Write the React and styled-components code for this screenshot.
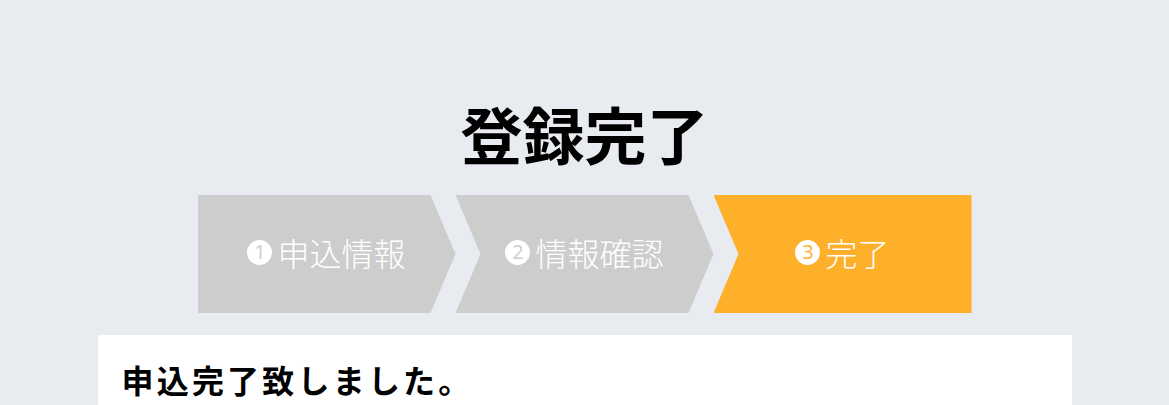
import React from 'react';
import styled, { createGlobalStyle } from 'styled-components';

const GlobalStyle = createGlobalStyle`
    html, body {
        margin: 0;
        padding: 0;
        background: #e8ebf0;
    }
    body {
        font-family: "Noto Sans CJK JP", "Noto Sans", sans-serif;
        color: #000;
    }
`;

const steps = [
    { no: 1, label: '申込情報' },
    { no: 2, label: '情報確認' },
    { no: 3, label: '完了' },
];

// depth of the chevron point / notch
const ARROW = 25;

function Step({ no, label, active, first, last }) {
    return (
        <StepItem $active={active} $first={first} $last={last}>
            <Badge $active={active}>{no}</Badge>
            <StepLabel>{label}</StepLabel>
        </StepItem>
    );
}

function App() {
    const current = 3;

    return (
        <Page>
            <GlobalStyle />
            <Title>登録完了</Title>

            {/* progress arrows */}
            <StepBar>
                {steps.map((s, i) => (
                    <Step
                        key={s.no}
                        no={s.no}
                        label={s.label}
                        active={s.no === current}
                        first={i === 0}
                        last={i === steps.length - 1}
                    />
                ))}
            </StepBar>

            <Card>
                <Message>申込完了致しました。</Message>
            </Card>
        </Page>
    );
}

const Page = styled.div`
    display: flex;
    flex-direction: column;
    align-items: center;
    padding-top: 95px;
    min-height: 405px;
    box-sizing: border-box;
    overflow: hidden;
`;

const Title = styled.h1`
    margin: 0 0 24px;
    font-size: 62px;
    font-weight: 700;
    line-height: 76px;
`;

const StepBar = styled.div`
    display: grid;
    grid-template-columns: repeat(3, 1fr);
    width: 774px;
    height: 118px;
`;

const StepItem = styled.div`
    display: flex;
    align-items: center;
    justify-content: center;
    gap: 5px;
    padding-bottom: 4px;
    background: ${({ $active }) => ($active ? '#feb02a' : '#cdcdcd')};
    color: #fff;
    clip-path: ${({ $first, $last }) => {
        const right = $last
            ? '100% 0, 100% 100%'
            : `calc(100% - ${ARROW}px) 0, 100% 50%, calc(100% - ${ARROW}px) 100%`;
        const left = $first ? '0 100%' : `0 100%, ${ARROW}px 50%`;
        return `polygon(0 0, ${right}, ${left})`;
    }};
`;

const Badge = styled.span`
    flex: none;
    display: inline-flex;
    align-items: center;
    justify-content: center;
    width: 25px;
    height: 25px;
    border-radius: 50%;
    background: #fff;
    color: ${({ $active }) => ($active ? '#feb02a' : '#cdcdcd')};
    font-family: "Open Sans", "Noto Sans", sans-serif;
    font-size: 20px;
    font-weight: 400;
    line-height: 1;
`;

const StepLabel = styled.span`
    font-size: 32px;
    font-weight: 300;
    line-height: 1;
`;

const Card = styled.div`
    width: 974px;
    margin-top: 22px;
    padding: 25px 24px 24px;
    box-sizing: border-box;
    background: #fff;
`;

const Message = styled.p`
    margin: 0;
    font-size: 32px;
    font-weight: 700;
    line-height: 1.2;
    letter-spacing: 0.1em;
`;

export default App;
